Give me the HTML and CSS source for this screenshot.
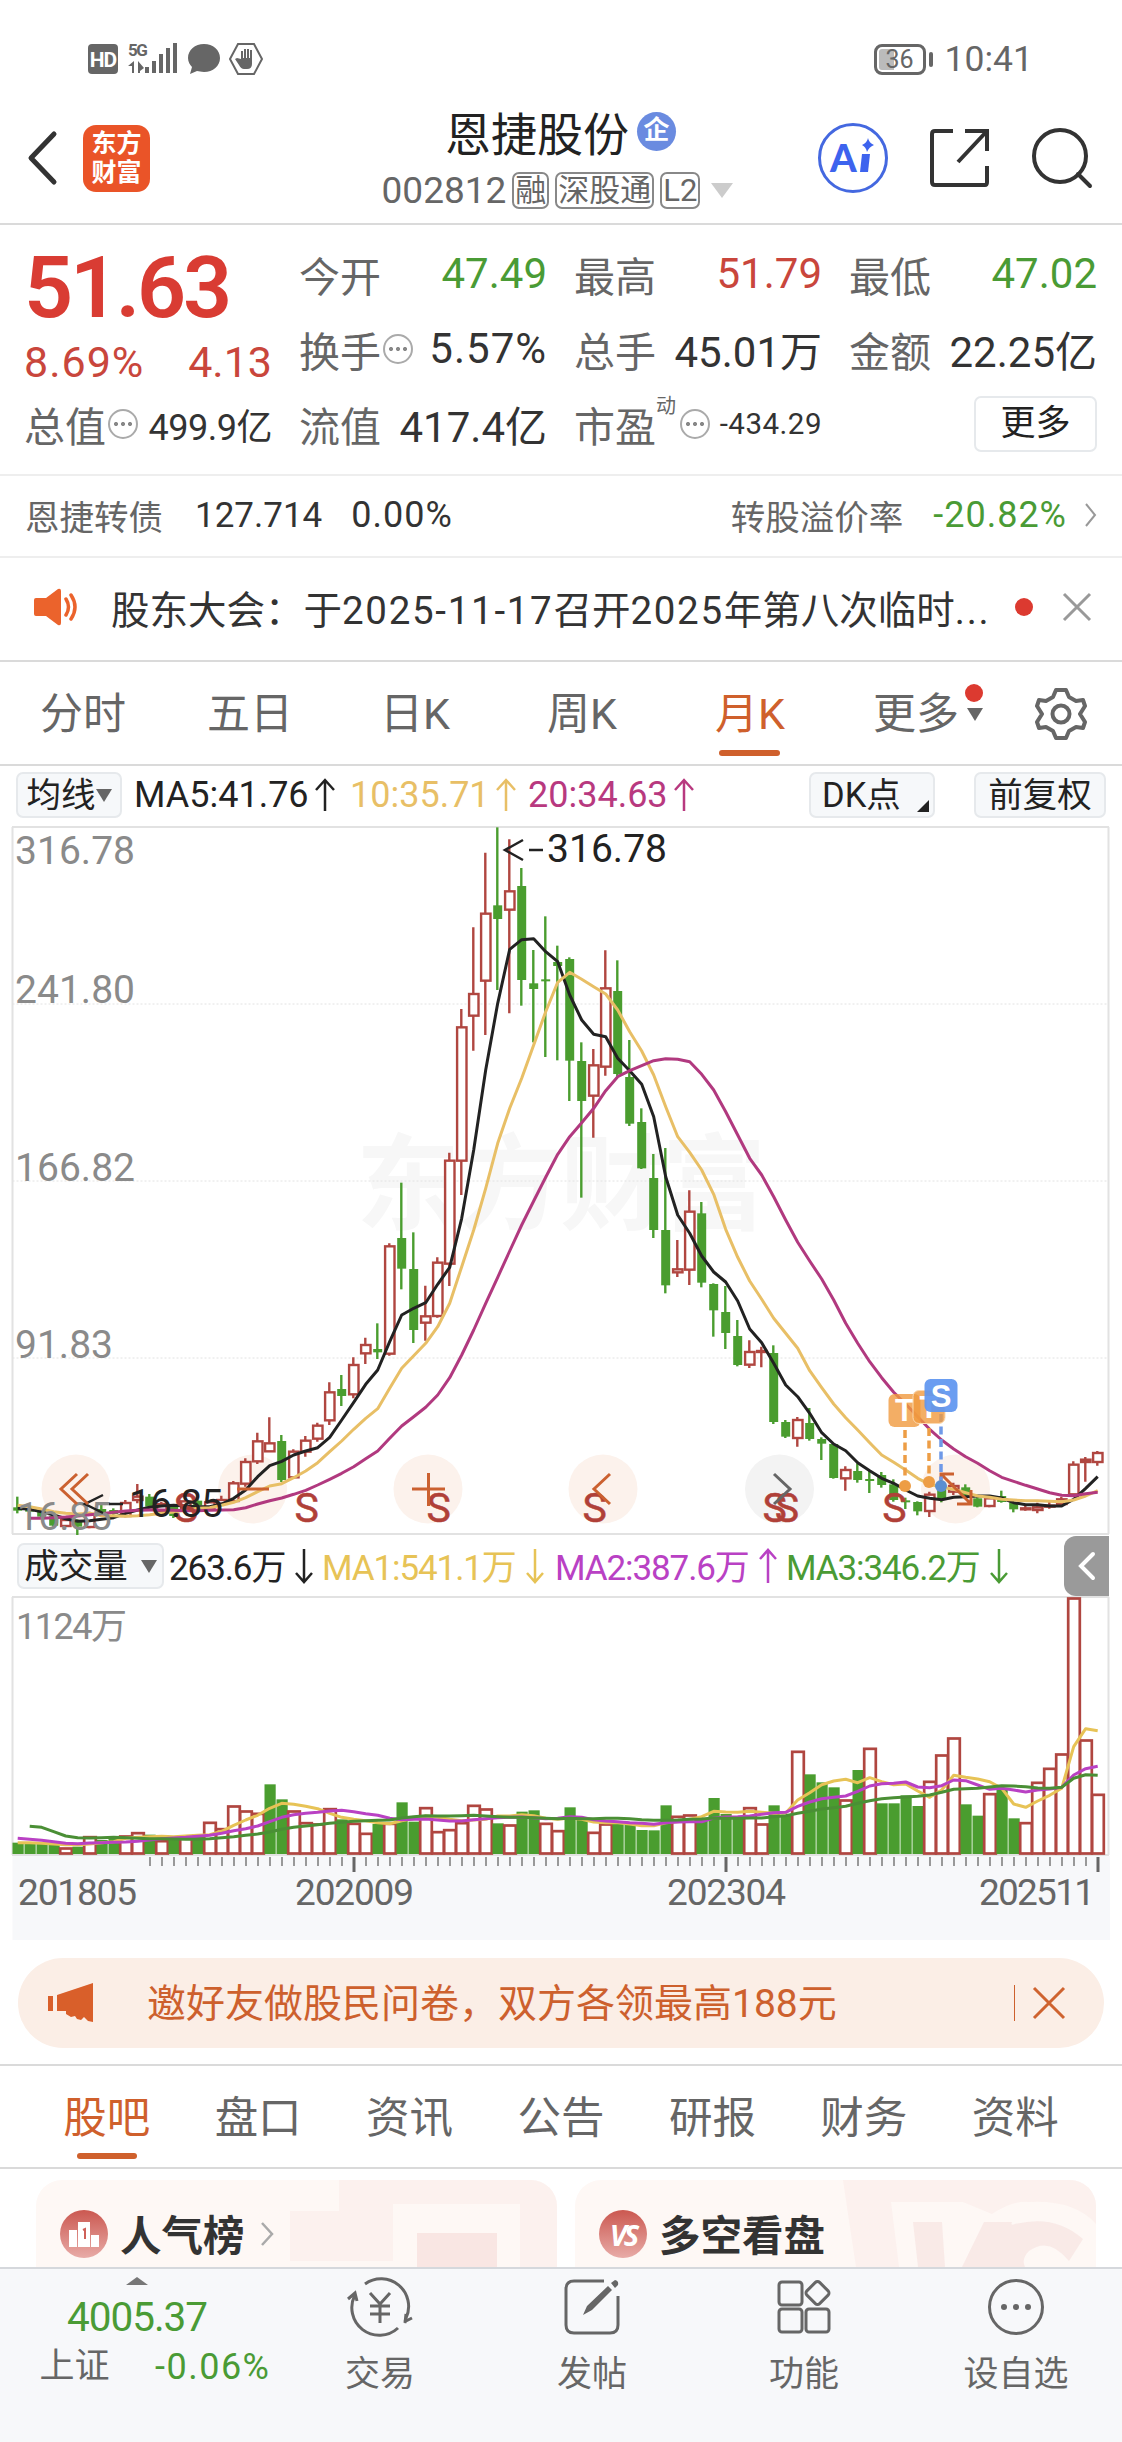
FILE: index.html
```html
<!DOCTYPE html>
<html lang="zh-CN">
<head>
    <meta charset="UTF-8">
    <meta name="viewport" content="width=device-width, initial-scale=1.0">
    <title>恩捷股份 002812</title>
    <link rel="stylesheet" href="styles.css">
</head>
<body>
    <div class="status">
        <div class="status-icons">
            <svg width="180" height="34" viewBox="86 42 180 34" fill="#666">
                <rect x="88" y="44" width="30" height="30" rx="4"/>
                <text x="103" y="66.500" class="hd">HD</text>
                <text x="128" y="56" class="net">5G</text>
                <path d="M134 61v12h-2v-7h-4zM138 61v12h2v-2l4-3z"/>
                <path d="M145 67h4v6h-4zM152 61h4v12h-4zM159 54h4v19h-4zM166 48h4v25h-4zM173 43h4v30h-4z"/>
                <path d="M204 44c9 0 16 6 16 14s-7 14-16 14c-3 0-5-1-7-1l-7 3 2-7c-2-2-4-5-4-9 0-8 7-14 16-14z"/>
                <path d="M238 44h16l8 15-8 15h-16l-8-15z" fill="none" stroke="#666" stroke-width="2"/>
                <path d="M241 59v-8h2v7h1v-9h2v9h1v-9h2v9h1v-8h2v14q0 5-5 5h-3q-3 0-5-4l-4-6 2-1z"/>
            </svg>
        </div>
        <div class="status-right">
            <div class="battery">36</div>
            <i class="battery-nub"></i>
            <span class="clock">10:41</span>
        </div>
    </div>

    <header class="top">
        <div class="top-left">
            <svg width="32" height="56" viewBox="0 0 32 56"><path d="M27 4 4 28l23 24" fill="none" stroke="#333" stroke-width="5" stroke-linecap="round" stroke-linejoin="round"/></svg>
            <div class="logo">东方<br>财富</div>
        </div>
        <div class="top-title">
            <div class="name">恩捷股份<span class="corp">企</span></div>
            <div class="code"><span>002812</span><b>融</b><b>深股通</b><b>L2</b><i class="tri"></i></div>
        </div>
        <div class="top-right">
            <svg width="72" height="72" viewBox="0 0 72 72">
                <circle cx="36" cy="36" r="33.5" fill="none" stroke="#4468e0" stroke-width="3"/>
                <text x="13" y="50" class="ai">A</text>
                <path d="M45 32h8l-2 18h-8z" fill="#3d63ee"/>
                <path d="M51 16q1 5 6 7-5 2-7 7-1-5-5-7 5-2 6-7z" fill="#3d63ee"/>
            </svg>
            <svg width="60" height="60" viewBox="0 0 60 60" fill="none" stroke="#333" stroke-width="4">
                <path d="M23 3H5q-3 0-3 3v48q0 3 3 3h50q2 0 2-3V38M35 3h22v20M57 3 28 34"/>
            </svg>
            <svg width="62" height="62" viewBox="0 0 62 62" fill="none" stroke="#333" stroke-width="4">
                <circle cx="29" cy="29" r="26"/><path d="m47 47 12 12" stroke-linecap="round"/>
            </svg>
        </div>
    </header>

    <section class="quote">
        <div class="q-price">
            <div class="price">51.63</div>
            <div class="change"><span class="pct">8.69%</span><span>4.13</span></div>
        </div>
        <div class="q"><label>今开</label><span class="green">47.49</span></div>
        <div class="q"><label>最高</label><span class="red">51.79</span></div>
        <div class="q"><label>最低</label><span class="green">47.02</span></div>
        <div class="q"><label>换手</label><i class="dots"></i><span class="pct">5.57%</span></div>
        <div class="q"><label>总手</label><span>45.01万</span></div>
        <div class="q"><label>金额</label><span>22.25亿</span></div>
        <div class="q"><label>总值</label><i class="dots"></i><span class="mid">499.9亿</span></div>
        <div class="q"><label>流值</label><span>417.4亿</span></div>
        <div class="q"><label>市盈</label><sup>动</sup><i class="dots"></i><span class="small">-434.29</span></div>
        <div class="q q-more"><button>更多</button></div>
    </section>

    <section class="bond">
        <span class="gray">恩捷转债</span><span class="bond-price">127.714</span><span class="pct">0.00%</span>
        <span class="gray bond-rate">转股溢价率</span><span class="green pct">-20.82%</span>
        <svg width="13" height="24" viewBox="0 0 13 24"><path d="m2 1 9 11-9 11" fill="none" stroke="#999" stroke-width="2"/></svg>
    </section>

    <section class="notice">
        <svg width="46" height="38" viewBox="0 0 46 38" fill="#eb632c">
            <path d="M2 10h10L24 1q3-1 3 2v32q0 3-3 2L12 28H2q-2 0-2-2V12q0-2 2-2z"/>
            <path d="M32 11q5 8 0 16M37 7q8 12 0 24" fill="none" stroke="#eb632c" stroke-width="3.5" stroke-linecap="round"/>
        </svg>
        <p>股东大会：于<span>2025-11-17</span>召开<span>2025</span>年第八次临时<span>...</span></p>
        <i class="dot"></i>
        <svg width="30" height="30" viewBox="0 0 30 30"><path d="m2 2 26 26M28 2 2 28" stroke="#999" stroke-width="3"/></svg>
    </section>

    <nav class="periods">
        <a>分时</a><a>五日</a><a>日K</a><a>周K</a><a class="active">月K</a>
        <a class="more">更多<i class="dot"></i><i class="tri"></i></a>
        <svg width="52" height="56" viewBox="-26 -28 52 56" fill="none" stroke="#666" stroke-width="4" stroke-linejoin="round">
            <path d="M-5-24H5L8-17 15-13 22-14 24-8 19 0 24 8 22 14 15 13 8 17 5 24H-5L-8 17-15 13-22 14-24 8-19 0-24-8-22-14-15-13-8-17z"/>
            <circle r="8.5"/>
        </svg>
    </nav>

    <div class="ma-row">
        <button class="btn-ma">均线<i class="tri"></i></button>
        <span class="ma5">MA5:41.76<svg class="up" viewBox="0 0 22 34"><path d="M11 33V3M2 12l9-10 9 10"/></svg></span>
        <span class="ma10">10:35.71<svg class="up" viewBox="0 0 22 34"><path d="M11 33V3M2 12l9-10 9 10"/></svg></span>
        <span class="ma20">20:34.63<svg class="up" viewBox="0 0 22 34"><path d="M11 33V3M2 12l9-10 9 10"/></svg></span>
        <button class="btn-dk">DK点<i></i></button>
        <button class="btn-fq">前复权</button>
    </div>

    <svg class="kline" width="1122" height="712" viewBox="0 824 1122 712">
        <text x="356" y="1222" class="watermark" textLength="410">东方财富</text>
        <path d="M12.5 1004H1108M12.5 1181H1108M12.5 1358H1108" stroke="#e2e2e2" stroke-dasharray="2 2"/>
        <path d="M12.5 827V1534M1108.5 827V1534M12 827H1109M12 1534H1109" stroke="#e2e2e2" stroke-width="2"/>
        <g fill="#fcf2ec">
            <circle cx="76" cy="1489" r="34.5"/><circle cx="252.6" cy="1489" r="34.5"/><circle cx="428" cy="1489" r="34.5"/>
            <circle cx="603" cy="1489" r="34.5"/><circle cx="779.5" cy="1489" r="34.5" fill="#f3f3f3"/><circle cx="955.5" cy="1489" r="34.5"/>
        </g>
        <g class="axis">
            <text x="15" y="864" textLength="120">316.78</text>
            <text x="15" y="1003" textLength="120">241.80</text>
            <text x="15" y="1181" textLength="120">166.82</text>
            <text x="15" y="1358" textLength="98">91.83</text>
        </g>
        <g id="candles" transform="translate(0 820)"></g>
        <g class="axis"><text x="17" y="1530" textLength="95">16.85</text></g>
        <g class="sell">
            <text x="186" y="1522">S</text><text x="306.6" y="1522">S</text><text x="438.6" y="1522">S</text><text x="594.6" y="1522">S</text>
            <text x="774.6" y="1522">S</text><text x="787" y="1522">S</text><text x="894.5" y="1522">S</text>
        </g>
        <g class="mark">
            <text x="547" y="862" textLength="120">316.78</text>
            <text x="129" y="1517" textLength="94">16.85</text>
            <path d="m523 840-18 10 18 10M529 850h14M103 1495l-18 9 18 9M109 1504h14"/>
        </g>
        <g fill="none" stroke="#cb6130" stroke-width="3">
            <path d="m77 1474-16 15 16 15M88 1474l-16 15 16 15M237 1489h32M412 1489h33M428.500 1473v33M610 1474l-16 15 16 15"/>
            <path d="m774 1474 16 15-16 15" stroke="#666"/>
            <path d="M941 1488v-14h13M941 1474l30 30M957 1504h14v-14"/>
        </g>
        <g stroke-width="3.500" stroke-dasharray="8 4.500">
            <path d="M905 1430v50M929 1428v48" stroke="#ed9d45"/><path d="M941 1414v66" stroke="#6f99e8"/>
        </g>
        <circle cx="905" cy="1486" r="6" fill="#ed9d45"/><circle cx="929" cy="1482" r="6" fill="#ed9d45"/><circle cx="941" cy="1486" r="6" fill="#5b8fd0"/>
        <g class="badge">
            <rect x="888.500" y="1394" width="32" height="33" rx="6" fill="#f09a3e" fill-opacity=".8"/><text x="904.500" y="1421">T</text>
            <rect x="913" y="1390.500" width="32" height="33" rx="6" fill="#f09a3e" fill-opacity=".8" stroke="#fbd9b0"/><text x="929" y="1418">T</text>
            <rect x="924.500" y="1379" width="33" height="33" rx="6" fill="#5d95f0" fill-opacity=".92"/><text x="941" y="1407">S</text>
        </g>
    </svg>

    <div class="vol-row">
        <button>成交量<i class="tri"></i></button>
        <span class="v0">263.6万<svg class="down" viewBox="0 0 18 36"><path d="M9 1v32M1 25l8 9 8-9"/></svg></span>
        <span class="v1">MA1:541.1万<svg class="down" viewBox="0 0 18 36"><path d="M9 1v32M1 25l8 9 8-9"/></svg></span>
        <span class="v2">MA2:387.6万<svg class="down" viewBox="0 0 18 36"><path d="M9 35V3M1 11l8-9 8 9"/></svg></span>
        <span class="v3">MA3:346.2万<svg class="down" viewBox="0 0 18 36"><path d="M9 1v32M1 25l8 9 8-9"/></svg></span>
        <div class="drawer"><svg width="18" height="30" viewBox="0 0 18 30"><path d="M15 3 3 15l12 12" fill="none" stroke="#fff" stroke-width="4" stroke-linecap="round"/></svg></div>
    </div>

    <svg class="volume" width="1122" height="344" viewBox="0 1596 1122 344">
        <rect x="12.500" y="1856" width="1097.500" height="84" fill="#f7f8fa"/>
        <path d="M12.500 1597V1855M1108.500 1597V1855M12 1597H1109M12 1855H1109" stroke="#e2e2e2" stroke-width="2"/>
        <g class="axis"><text x="16" y="1639" class="max" textLength="111">1124万</text></g>
        <g id="bars" transform="translate(0 1540)"></g>
        <g class="dates">
            <text x="18" y="1905" textLength="119">201805</text>
            <text x="295" y="1905" textLength="119">202009</text>
            <text x="667" y="1905" textLength="119">202304</text>
            <text x="979" y="1905" textLength="116">202511</text>
        </g>
    </svg>

    <div class="banner">
        <svg width="48" height="42" viewBox="0 0 48 42" fill="#d95f2a">
            <path d="M0 14h5v15H0zM9 13 45 1v39l-5-1-4-4-3 3-4-1-2-3-4 1-5-3v-3H9z"/>
        </svg>
        <p>邀好友做股民问卷，双方各领最高188元</p>
        <i></i>
        <svg width="34" height="34" viewBox="0 0 34 34"><path d="m2 2 30 30M32 2 2 32" stroke="#cf632f" stroke-width="3"/></svg>
    </div>

    <nav class="tabs">
        <a class="active">股吧</a><a>盘口</a><a>资讯</a><a>公告</a><a>研报</a><a>财务</a><a>资料</a>
    </nav>

    <div class="cards">
        <div class="card">
            <svg class="card-bg" width="521" height="87" viewBox="0 0 521 87"><path d="M303 0h218v87h-37V24H357v57H254V31h49z" fill="#f9e5e3" fill-opacity=".35"/><path d="M381 53h80v34h-80z" fill="#f8e3e1" fill-opacity=".9"/></svg>
            <div class="card-icon"><svg width="32" height="26" viewBox="0 0 32 26" fill="#fff"><path d="M1 9h8v17H1zM23 14h8v12h-8zM10 1h12v25H10z"/><path d="m15 9 2-1v10" fill="none" stroke="#cf6058" stroke-width="2"/></svg></div>
            <h3>人气榜</h3>
            <svg width="14" height="24" viewBox="0 0 14 24"><path d="m2 1 10 11L2 23" fill="none" stroke="#aaa" stroke-width="2.500"/></svg>
        </div>
        <div class="card">
            <svg class="card-bg" width="521" height="87" viewBox="0 0 521 87"><path d="M268 0h253v44Q500 20 455 22q-18-2-38 12L388 22h-72l8 65h-43z" fill="#f9e5e3" fill-opacity=".4"/><path d="M338 42h29l3 45h-27zM409 42h28q-2 4 3 2 40-10 68 15l-14 22q-20-25-40-10-8 8-4 16h-63z" fill="#f8e6e3" fill-opacity=".8"/></svg>
            <div class="card-icon vs">VS</div>
            <h3>多空看盘</h3>
        </div>
    </div>

    <footer class="bottom">
        <div class="index">
            <i class="tri-up"></i>
            <div class="index-value">4005.37</div>
            <div class="index-line"><span>上证</span><span class="green pct">-0.06%</span></div>
        </div>
        <a>
            <svg width="66" height="60" viewBox="-33 -30 66 60" fill="none" stroke="#666" stroke-width="3">
                <path d="M-15-23A27.500 27.500 0 0 1 26 11M18 21A27.500 27.500 0 0 1-25-12M24 15l8-4M25 16l1-9M-32-8l7-6 2 8M-10-14 0-3l10-11M0-3v19M-10-1h20M-10 7h20"/>
            </svg>交易</a>
        <a>
            <svg width="60" height="60" viewBox="0 0 60 60" fill="none" stroke="#666" stroke-width="3">
                <path d="M42 4H12q-8 0-8 8v36q0 8 8 8h36q8 0 8-8V19"/>
                <path d="m21 38 4-9L46 9l4 4-20 20zM49 6l4-3q4 1 3 5l-3 3z" fill="#666" stroke="none"/>
            </svg>发帖</a>
        <a>
            <svg width="60" height="60" viewBox="0 0 60 60" fill="none" stroke="#666" stroke-width="3">
                <rect x="5" y="5" width="23" height="23" rx="3"/><rect x="5" y="32" width="23" height="23" rx="3"/><rect x="32" y="32" width="23" height="23" rx="3"/>
                <rect x="34.500" y="7" width="18" height="18" rx="3" transform="rotate(45 43.500 16)"/>
            </svg>功能</a>
        <a>
            <svg width="60" height="60" viewBox="-30 -30 60 60" fill="#666">
                <circle r="26.500" fill="none" stroke="#666" stroke-width="3"/><circle cx="-12" r="3"/><circle r="3"/><circle cx="12" r="3"/>
            </svg>设自选</a>
    </footer>

    <script src="chart.js"></script>
</body>
</html>
```

FILE: styles.css
```css
* {
    box-sizing: border-box;
}

body {
    margin: 0;
    width: 1122px;
    height: 2442px;
    overflow: hidden;
    background: #fff;
    color: #333;
    font-family: Roboto, "Noto Sans CJK SC", sans-serif;
    display: flex;
    flex-direction: column;
}

body > * {
    flex: none;
}

p, h3 {
    margin: 0;
}

button {
    font-family: inherit;
    color: #222;
    padding: 0;
    background: #f6f8fa;
    border: 2px solid #e6e9ec;
    border-radius: 7px;
}

.green { color: #4a9b35; }
.red { color: #c9463c; }
.gray { color: #666; }

.tri {
    display: inline-block;
    border: 8px solid transparent;
    border-top: 13px solid #666;
    border-bottom: 0;
}

.dot {
    width: 18px;
    height: 18px;
    border-radius: 50%;
    background: #dc3a30;
}

/* status bar */
.status {
    height: 108px;
    padding: 10px 89px 0 86px;
    display: flex;
    align-items: center;
    justify-content: space-between;
}

.status-icons svg {
    display: block;
}

.hd {
    font: bold 21px Roboto, sans-serif;
    letter-spacing: -1px;
    text-anchor: middle;
    fill: #fff;
}

.net {
    font: bold 17px Roboto, sans-serif;
    letter-spacing: -1.500px;
}

.status-right {
    display: flex;
    align-items: center;
    color: #666;
}

.battery {
    width: 52px;
    height: 31px;
    border: 3px solid #666;
    border-radius: 8px;
    font-size: 25px;
    line-height: 26px;
    text-align: center;
    background: linear-gradient(to right, #bbb 36%, #fff 36%);
    box-shadow: inset 0 0 0 2px #fff;
}

.battery-nub {
    width: 4px;
    height: 15px;
    margin: 0 12px 0 3px;
    border-radius: 2px;
    background: #666;
}

.clock {
    font-size: 35.500px;
}

/* header */
.top {
    height: 117px;
    border-bottom: 2px solid #dadada;
    display: flex;
    justify-content: space-between;
    padding: 0 29px 0 27px;
}

.top-left {
    width: 304px;
    display: flex;
    align-items: center;
    padding-bottom: 15px;
}

.logo {
    margin-left: 24px;
    width: 67px;
    height: 67px;
    border-radius: 13px;
    background: #ea5428;
    color: #fff;
    font-size: 25px;
    font-weight: bold;
    line-height: 29px;
    padding-top: 4px;
    text-align: center;
}

.top-title {
    width: 370px;
    display: flex;
    flex-direction: column;
    align-items: center;
}

.name {
    display: flex;
    align-items: center;
    height: 56px;
    margin-top: -5px;
    font-size: 46px;
    color: #222;
    padding-left: 13px;
}

.corp {
    margin-left: 8px;
    width: 39px;
    height: 39px;
    border-radius: 50%;
    background: #6a8be0;
    color: #fff;
    font-size: 26px;
    font-weight: bold;
    line-height: 37px;
    text-align: center;
}

.code {
    display: flex;
    align-items: center;
    margin-top: 10px;
    margin-left: 7px;
    font-size: 37px;
    color: #666;
}

.code b {
    font-weight: normal;
    height: 37px;
    font-size: 31px;
    line-height: 33px;
    border: 2px solid #888;
    border-radius: 7px;
    padding: 0 1px;
    margin-left: 6px;
}

.code .tri {
    margin-left: 11px;
    border-width: 15px 11px 0;
    border-top-color: #ccc;
}

.top-right {
    width: 316px;
    display: flex;
    align-items: center;
    justify-content: flex-end;
    gap: 41px;
    padding-bottom: 15px;
}

.ai {
    font: 900 38px Lato, sans-serif;
    fill: #3d63ee;
}

/* quote table */
.quote {
    height: 251px;
    padding: 11px 24px 0 24px;
    border-bottom: 2px solid #eee;
    display: grid;
    grid-template-columns: repeat(4, 248px);
    grid-template-rows: repeat(3, 75px);
    column-gap: 27px;
}

.q-price {
    grid-row: span 2;
    color: #d93c33;
    line-height: 1;
}

.price {
    font-size: 86px;
    font-weight: 600;
    letter-spacing: -3.200px;
    padding-top: 9px;
}

.change {
    display: flex;
    justify-content: space-between;
    font-size: 43px;
    margin-top: 10px;
    color: #c9463c;
}

.q {
    display: flex;
    align-items: center;
    white-space: nowrap;
    font-size: 42px;
}

.q label {
    font-size: 41px;
    color: #666;
}

.q span {
    margin-left: auto;
}

.pct {
    letter-spacing: 1px;
}

.q .mid {
    font-size: 36px;
    letter-spacing: -0.500px;
}

.q .small {
    font-size: 29.500px;
    letter-spacing: 0.500px;
}

.q sup {
    width: 20px;
    margin-right: 4px;
    font-size: 20px;
    color: #666;
    align-self: flex-start;
    line-height: 28px;
    padding-top: 6px;
}

.dots {
    width: 30px;
    height: 30px;
    margin-left: 2px;
    border: 2px solid #aaa;
    border-radius: 50%;
    background: radial-gradient(circle, #888 1.800px, transparent 2.300px) 0 0 / 8px 100% no-repeat,
        radial-gradient(circle, #888 1.800px, transparent 2.300px) center / 8px 100% no-repeat,
        radial-gradient(circle, #888 1.800px, transparent 2.300px) 100% 0 / 8px 100% no-repeat;
    background-origin: content-box;
    padding: 0 2px;
}

.q sup + .dots {
    margin-left: 0;
}

.q-more {
    justify-content: flex-end;
}

.q-more button {
    width: 123px;
    height: 56px;
    background: #fff;
    font-size: 35px;
    line-height: 50px;
}

/* convertible bond */
.bond {
    height: 82px;
    padding: 0 25px 2px 25px;
    border-bottom: 2px solid #eee;
    display: flex;
    align-items: center;
    font-size: 35px;
}

.bond-price {
    margin: 0 29px 0 32px;
}

.bond .gray {
    font-size: 34.500px;
}

.bond .pct {
    font-size: 36px;
}

.bond .bond-rate {
    margin: 0 30px 0 auto;
}

.bond svg {
    margin-left: 17px;
}

.notice {
    height: 104px;
    padding: 0 30px 4px 34px;
    border-bottom: 2px solid #dadada;
    display: flex;
    align-items: center;
    font-size: 38.500px;
}

.notice p {
    width: 882px;
    margin-left: 31px;
    white-space: nowrap;
}

.notice p span {
    letter-spacing: 1.700px;
}

.notice .dot {
    margin: 0 29px 0 22px;
}

/* period tabs */
.periods {
    height: 104px;
    padding: 2px 35px 0 40px;
    border-bottom: 2px solid #dadada;
    display: flex;
    align-items: center;
    font-size: 43px;
    color: #666;
}

.periods a {
    position: relative;
    line-height: 60px;
    width: 167px;
    white-space: nowrap;
}

.periods a:nth-child(3) { padding-left: 6px; }
.periods a:nth-child(4) { padding-left: 6px; }
.periods a:nth-child(5) { padding-left: 7px; }

.periods .more {
    width: 159px;
    margin-left: -2px;
}

.periods .active,
.tabs .active {
    color: #cf602c;
}

.periods .active::after {
    content: "";
    position: absolute;
    left: 11px;
    bottom: -12px;
    width: 61px;
    height: 6px;
    border-radius: 3px;
    background: #cf602c;
}

.periods .dot {
    position: absolute;
    left: 92px;
    top: 0;
}

.periods .more .tri {
    position: absolute;
    left: 94px;
    top: 24px;
}

.periods svg {
    margin-left: auto;
}

/* indicator rows */
.ma-row {
    height: 58px;
    padding: 0 16px;
    display: flex;
    align-items: center;
    font-size: 36px;
    color: #222;
}

.ma-row span,
.vol-row span {
    display: flex;
    align-items: center;
    white-space: nowrap;
}

.ma-row button,
.vol-row button {
    height: 46px;
    line-height: 40px;
    font-size: 34.500px;
    display: flex;
    align-items: center;
    justify-content: center;
}

.btn-ma { width: 106px; }

.ma-row svg,
.vol-row svg.down {
    flex: none;
    fill: none;
    stroke: currentColor;
    stroke-width: 2.500;
}

.up {
    width: 22px;
    height: 34px;
    margin-left: 5px;
}

.ma5 { width: 216px; margin-left: 12px; }
.ma10 { width: 178px; color: #e8bf66; }
.ma20 { color: #b8397f; }

.btn-dk {
    width: 126px;
    margin-left: auto;
    position: relative;
}

.ma-row .btn-dk {
    justify-content: flex-start;
    padding-left: 11px;
}

.btn-dk i {
    position: absolute;
    right: 4px;
    bottom: 4px;
    border: 6px solid #222;
    border-top-color: transparent;
    border-left-color: transparent;
}

.btn-fq {
    width: 132px;
    margin-left: 39px;
}

.kline,
.volume {
    display: block;
}

.axis {
    font-size: 39px;
    fill: #8a8a8a;
}

.axis .max { font-size: 36px; }

.dates {
    font-size: 37px;
    fill: #666;
}

.watermark {
    font-size: 104px;
    font-weight: bold;
    fill: #f7f7f7;
}

.sell {
    font: 400 41px Roboto, sans-serif;
    text-anchor: middle;
    fill: #b04038;
    stroke: #b04038;
    stroke-width: 0.500;
}

.mark {
    font-size: 39px;
    fill: #222;
}

.mark path {
    fill: none;
    stroke: #222;
    stroke-width: 2.500;
}

.badge {
    font: bold 31px "Liberation Sans", sans-serif;
    text-anchor: middle;
}

.badge text { fill: #fff; }

.vol-row {
    height: 60px;
    padding: 0 13px 0 17px;
    display: flex;
    align-items: center;
    font-size: 35px;
    color: #222;
}

.vol-row span {
    letter-spacing: -1.100px;
    padding-bottom: 4px;
}

.vol-row button { width: 147px; }
.vol-row .tri { margin-left: 13px; }

.down {
    width: 18px;
    height: 36px;
    margin: 4px 0 0 10px;
}

.v0 { width: 153px; margin-left: 5px; }
.v1 { width: 233px; color: #e7c356; }
.v2 { width: 231px; color: #b941c4; }
.v3 { color: #4a9b35; }

.drawer {
    width: 45px;
    height: 60px;
    margin-left: auto;
    border-radius: 12px 0 0 12px;
    background: #9a9a9a;
    display: flex;
    align-items: center;
    justify-content: center;
}

/* survey banner */
.banner {
    height: 90px;
    margin: 18px 18px 16px;
    padding: 0 38px 0 30px;
    border-radius: 45px;
    background: #fbeee6;
    display: flex;
    align-items: center;
    font-size: 39px;
    color: #cd602d;
}

.banner p {
    margin-left: 51px;
    padding-bottom: 6px;
    white-space: nowrap;
}

.banner i {
    width: 1px;
    height: 36px;
    margin: 0 17px 0 auto;
    background: #cd602d;
}

.tabs {
    height: 105px;
    border-top: 2px solid #dadada;
    border-bottom: 2px solid #dadada;
    padding: 4px 31px 0;
    display: flex;
    align-items: center;
    font-size: 43.500px;
    color: #666;
}

.tabs a {
    width: 151.500px;
    text-align: center;
    line-height: 60px;
    position: relative;
}

.tabs .active::after {
    content: "";
    position: absolute;
    left: 46px;
    bottom: -10px;
    width: 60px;
    height: 6px;
    border-radius: 3px;
    background: #cf602c;
}

.cards {
    height: 98px;
    padding: 11px 26px 0 36px;
    display: flex;
    gap: 18px;
    overflow: hidden;
}

.card {
    position: relative;
    width: 521px;
    height: 120px;
    border-radius: 26px;
    overflow: hidden;
    background: #fef8f5;
    display: flex;
    align-items: center;
    padding: 0 0 12px 24px;
}

.card-bg {
    position: absolute;
    left: 0;
    top: 0;
}

.card > :not(.card-bg) {
    position: relative;
}

.card-icon {
    width: 48px;
    height: 48px;
    border-radius: 50%;
    background: linear-gradient(#cb5850, #e8aba7);
    display: flex;
    align-items: center;
    justify-content: center;
}

.vs {
    font: italic bold 29px "Open Sans", sans-serif;
    letter-spacing: -3px;
    color: #fff;
}

.card h3 {
    margin: -2px 15px 0 12px;
    font-size: 41.500px;
}

/* bottom bar */
.bottom {
    flex: 1;
    border-top: 2px solid #d5d8dc;
    background: #f7f8fa;
    display: flex;
    font-size: 35px;
    color: #666;
}

.index {
    width: 274px;
    display: flex;
    flex-direction: column;
    align-items: center;
}

.tri-up {
    margin-top: 8px;
    border: 11px solid transparent;
    border-top: 0;
    border-bottom: 8px solid #777;
}

.index-value {
    margin-top: 7px;
    font-size: 40.500px;
    letter-spacing: -1px;
    line-height: 50px;
    color: #4a9b35;
}

.index-line {
    width: 231px;
    margin: 0 0 0 36px;
    line-height: 50px;
    display: flex;
    justify-content: space-between;
}

.index-line .pct {
    font-size: 36px;
    letter-spacing: 1.500px;
}

.bottom a {
    width: 212px;
    padding-top: 8px;
    display: flex;
    flex-direction: column;
    align-items: center;
    line-height: 50px;
}

.bottom a svg {
    margin-bottom: 13px;
}
```

FILE: chart.js
```js
// one month is 12px wide, vertical values are in thirds of a pixel
const STEP = 12;
const LEFT = 17.7;
const RED = '#b04640';
const GREEN = '#4a9d2f';

const x = i => +(LEFT + i * STEP).toFixed(1);

// [type, high, body top, body bottom, low]
const candles = [
    ['g', 2030, 2062, 2072, 2080], ['g', 2062, 2068, 2075, 2105], ['g', 2070, 2075, 2090, 2095], ['g', 2085, 2088, 2117, 2120],
    ['r', 2095, 2100, 2118, 2120], ['g', 2098, 2102, 2120, 2145], ['r', 2075, 2082, 2121, 2125], ['g', 2052, 2067, 2080, 2085],
    ['g', 2065, 2070, 2082, 2085], ['r', 2040, 2049, 2088, 2092], ['r', 1992, 2030, 2040, 2050], ['g', 2022, 2030, 2060, 2062],
    ['r', 2045, 2052, 2074, 2080], ['g', 2055, 2060, 2088, 2094], ['r', 2035, 2044, 2066, 2075], ['g', 2036, 2042, 2056, 2060],
    ['r', 2040, 2047, 2063, 2068], ['r', 2027, 2040, 2051, 2054], ['r', 1983, 1990, 2043, 2045], ['r', 1915, 1926, 1991, 2000],
    ['r', 1838, 1864, 1924, 1932], ['r', 1792, 1870, 1894, 1896], ['g', 1845, 1863, 1980, 1986], ['r', 1888, 1895, 1972, 1976],
    ['r', 1848, 1862, 1895, 1910], ['r', 1808, 1817, 1856, 1865], ['r', 1687, 1717, 1801, 1815], ['g', 1665, 1707, 1728, 1758],
    ['r', 1612, 1635, 1723, 1735], ['r', 1553, 1575, 1600, 1632], ['g', 1510, 1587, 1597, 1617], ['r', 1270, 1279, 1601, 1607],
    ['g', 1088, 1254, 1346, 1408], ['g', 1237, 1347, 1530, 1569], ['r', 1397, 1489, 1508, 1562], ['r', 1312, 1328, 1488, 1493],
    ['r', 998, 1022, 1331, 1398], ['r', 567, 622, 1022, 1125], ['r', 322, 522, 587, 692], ['r', 98, 281, 482, 645],
    ['g', 22, 256, 297, 510], ['r', 58, 214, 269, 580], ['g', 144, 198, 480, 557], ['g', 390, 490, 507, 667],
    ['g', 289, 478, 484, 711], ['g', 377, 426, 438, 721], ['g', 412, 417, 722, 843], ['g', 667, 723, 843, 1133],
    ['r', 687, 736, 827, 953], ['r', 391, 505, 740, 767], ['g', 421, 513, 762, 770], ['g', 660, 771, 911, 918],
    ['g', 865, 906, 1045, 1047], ['g', 1002, 1074, 1230, 1254], ['g', 984, 1230, 1396, 1420], ['r', 1260, 1348, 1357, 1371],
    ['r', 1111, 1175, 1349, 1395], ['g', 1146, 1180, 1388, 1402], ['g', 1390, 1392, 1471, 1550], ['g', 1398, 1476, 1539, 1587],
    ['g', 1500, 1548, 1635, 1639], ['r', 1561, 1596, 1634, 1644], ['r', 1580, 1593, 1596, 1642], ['g', 1576, 1599, 1806, 1812],
    ['g', 1800, 1806, 1850, 1854], ['r', 1791, 1800, 1854, 1880], ['g', 1764, 1809, 1857, 1862], ['g', 1852, 1857, 1871, 1920],
    ['g', 1870, 1872, 1974, 1976], ['r', 1939, 1950, 1975, 2012], ['g', 1930, 1953, 1980, 1988], ['g', 1950, 1977, 1983, 2019],
    ['g', 1956, 1965, 1995, 2003], ['g', 1978, 1993, 2040, 2045], ['g', 2033, 2041, 2047, 2067], ['g', 2044, 2046, 2074, 2086],
    ['r', 2015, 2024, 2073, 2091], ['g', 1990, 1998, 2035, 2047], ['r', 1988, 1998, 2015, 2025], ['g', 1993, 2002, 2025, 2032],
    ['g', 2030, 2035, 2060, 2062], ['r', 2025, 2035, 2058, 2062], ['g', 2012, 2028, 2046, 2048], ['g', 2045, 2047, 2068, 2077],
    ['r', 2055, 2065, 2068, 2072], ['r', 2048, 2062, 2070, 2080], ['r', 2045, 2057, 2060, 2066], ['r', 2030, 2038, 2052, 2056],
    ['r', 1924, 1934, 2023, 2027], ['r', 1911, 1919, 1926, 1985], ['r', 1893, 1899, 1926, 1937]
];

const ma5 = [2065, 2068, 2075, 2085, 2096, 2104, 2102, 2098, 2093, 2080, 2070, 2062, 2058, 2056, 2058, 2060, 2060, 2052, 2035, 2010,
    1970, 1937, 1924, 1905, 1893, 1883, 1852, 1800, 1747, 1693, 1650, 1565, 1485, 1465, 1448, 1393, 1342, 1195, 990, 750,
    550, 388, 359, 356, 395, 425, 525, 600, 643, 650, 715, 752, 793, 890, 1070, 1185, 1240, 1308, 1356, 1386,
    1443, 1527, 1568, 1630, 1695, 1730, 1780, 1838, 1872, 1892, 1928, 1952, 1975, 1990, 2010, 2028, 2035, 2039, 2032, 2030,
    2028, 2028, 2034, 2048, 2054, 2054, 2058, 2058, 2038, 2005, 1970];
const ma10 = [2056, 2060, 2067, 2075, 2080, 2082, 2080, 2087, 2087, 2089, 2087, 2084, 2080, 2076, 2070, 2065, 2063, 2056, 2047, 2033,
    2015, 1998, 1991, 1973, 1953, 1928, 1895, 1863, 1828, 1795, 1766, 1705, 1645, 1607, 1570, 1520, 1450, 1340, 1230, 1105,
    970, 865, 775, 675, 575, 487, 457, 478, 500, 522, 570, 635, 693, 765, 860, 950, 997, 1050, 1123, 1228,
    1312, 1383, 1438, 1495, 1540, 1585, 1652, 1703, 1752, 1793, 1830, 1868, 1905, 1927, 1950, 1975, 1993, 2002, 2008, 2018,
    2028, 2032, 2038, 2040, 2042, 2042, 2044, 2045, 2040, 2028, 2012];
const ma20 = [null, 2095, 2095, 2093, 2091, 2088, 2084, 2081, 2077, 2073, 2071, 2070, 2070, 2071, 2072, 2072, 2071, 2070, 2069, 2063,
    2052, 2042, 2034, 2023, 2011, 1995, 1978, 1960, 1940, 1916, 1893, 1855, 1818, 1790, 1762, 1725, 1673, 1605, 1530, 1450,
    1372, 1293, 1215, 1143, 1072, 1003, 950, 908, 865, 812, 770, 752, 737, 722, 716, 718, 725, 763, 810, 875,
    945, 1015, 1065, 1130, 1200, 1267, 1323, 1377, 1440, 1510, 1570, 1625, 1673, 1717, 1752, 1790, 1828, 1860, 1887, 1910,
    1930, 1952, 1972, 1984, 1996, 2007, 2018, 2026, 2027, 2021, 2017];

const volumes = [908, 912, 912, 915, 924, 920, 890, 900, 897, 888, 878, 884, 902, 895, 888, 882, 847, 866, 798, 813,
    820, 733, 778, 813, 848, 852, 806, 838, 850, 880, 852, 850, 787, 845, 803, 875, 869, 848, 796, 807,
    850, 855, 815, 811, 850, 872, 802, 840, 877, 852, 848, 848, 870, 871, 796, 829, 825, 838, 774, 822,
    833, 803, 852, 796, 825, 634, 703, 727, 742, 780, 690, 625, 790, 790, 766, 798, 724, 645, 594, 793,
    827, 761, 748, 835, 848, 727, 685, 642, 174, 600, 763];
const volumeColors = 'ggggrgrggrrgrgrgrrrr' + 'rggrrrrgrrgrggrrrrrr' + 'grggrrggrrgggggrrggg' + 'grrggrgggrgrggggrrrg' + 'grggrrrrrrr';

const vol1 = [908, 908, 910, 912, 914, 914, 912, 908, 905, 895, 892, 890, 889, 890, 888, 886, 884, 874, 856, 840,
    826, 805, 790, 793, 799, 806, 820, 832, 838, 842, 848, 851, 842, 836, 828, 832, 838, 842, 840, 838,
    828, 828, 824, 827, 835, 838, 834, 838, 846, 848, 848, 852, 857, 857, 848, 845, 838, 830, 814, 816,
    817, 814, 817, 820, 819, 780, 758, 734, 723, 718, 728, 713, 725, 734, 732, 753, 772, 750, 706, 712,
    717, 725, 745, 792, 802, 783, 766, 745, 620, 566, 572];
const vol2 = [895, 898, 901, 905, 910, 911, 909, 908, 907, 906, 904, 900, 896, 894, 892, 889, 886, 880, 872, 866,
    858, 845, 832, 824, 820, 817, 813, 811, 815, 821, 826, 835, 839, 838, 837, 840, 843, 843, 839, 836,
    833, 832, 831, 833, 836, 835, 830, 832, 839, 843, 845, 848, 850, 853, 848, 846, 845, 845, 834, 831,
    830, 828, 823, 818, 817, 799, 786, 776, 772, 768, 754, 738, 731, 730, 726, 741, 743, 737, 720, 722,
    735, 748, 745, 750, 756, 750, 747, 742, 705, 686, 679];
const vol3 = [null, 859, 862, 875, 888, 893, 894, 893, 892, 893, 895, 896, 896, 897, 898, 898, 896, 893, 890, 886,
    882, 876, 868, 862, 858, 854, 850, 847, 844, 842, 841, 840, 834, 830, 827, 828, 828, 827, 826, 828,
    830, 832, 832, 833, 835, 836, 835, 836, 836, 835, 835, 836, 839, 841, 841, 840, 838, 837, 834, 835,
    835, 834, 834, 830, 827, 820, 814, 807, 803, 799, 790, 782, 776, 773, 771, 769, 765, 757, 748, 746,
    745, 741, 737, 738, 740, 744, 745, 742, 715, 704, 706];

function line(values, color) {
    const points = values.map((v, i) => v === null ? '' : `${x(i)},${(v / 3).toFixed(1)}`).join(' ');
    return `<polyline points="${points}" fill="none" stroke="${color}" stroke-width="3" stroke-linejoin="round"/>`;
}

function drawCandles() {
    let html = '';
    candles.forEach(([type, high, top, bottom, low], i) => {
        const cx = x(i);
        const t = top / 3;
        const h = Math.max((bottom - top) / 3, 1);
        if (type === 'g') {
            html += `<path d="M${cx - 0.4} ${high / 3}V${low / 3}" stroke="${GREEN}" stroke-width="2.4"/>`;
            html += `<rect x="${cx - 4.5}" y="${t}" width="9" height="${h}" fill="${GREEN}"/>`;
        } else {
            html += `<path d="M${cx - 0.4} ${high / 3}V${t}M${cx - 0.4} ${t + h}V${low / 3}" stroke="${RED}" stroke-width="2.4"/>`;
            html += `<rect x="${cx - 4.6}" y="${t}" width="9.4" height="${h}" fill="#fff" stroke="${RED}" stroke-width="2.4"/>`;
        }
    });
    html += line(ma5, '#222') + line(ma10, '#e8bf66') + line(ma20, '#b1397f');
    document.getElementById('candles').innerHTML = html;
}

function drawVolumes() {
    const base = 942 / 3;
    let html = '';
    volumes.forEach((v, i) => {
        const cx = x(i);
        const t = v / 3;
        if (volumeColors[i] === 'g') {
            html += `<rect x="${cx - 5.2}" y="${t}" width="11.2" height="${base - t}" fill="${GREEN}"/>`;
        } else {
            html += `<rect x="${cx - 5.5}" y="${t + 0.5}" width="11.6" height="${base - t - 1}" fill="#fff" stroke="${RED}" stroke-width="2.7"/>`;
        }
        if (i > 10) {
            const major = i === 28 || i === 59 || i === 90;
            html += `<path d="M${cx + 0.3} 317v${major ? 15 : 9}" stroke="${major ? '#666' : '#999'}" stroke-width="${major ? 3 : 2}"/>`;
        }
    });
    html += line(vol1, '#e7c356') + line(vol2, '#b941c4') + line(vol3, '#4a8f35');
    document.getElementById('bars').innerHTML = html;
}

drawCandles();
drawVolumes();
```
